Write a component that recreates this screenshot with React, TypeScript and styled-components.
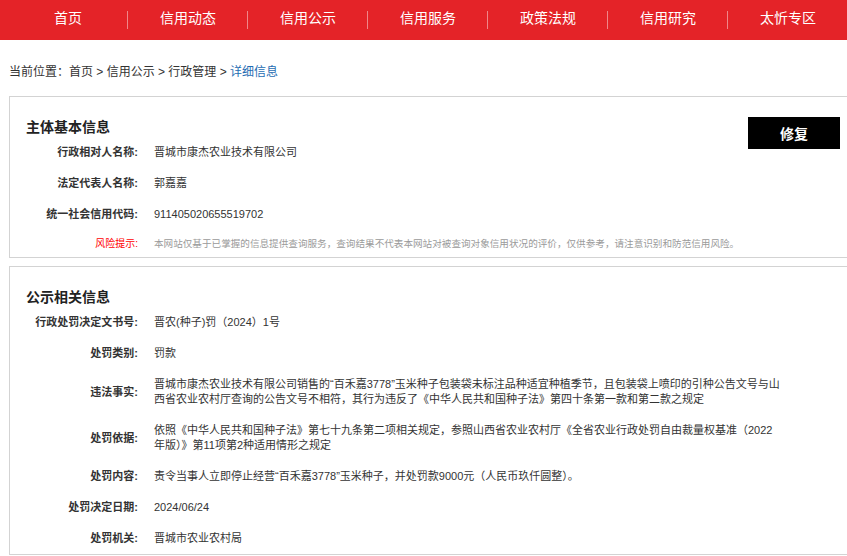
import React from "react";
import styled, { createGlobalStyle } from "styled-components";

const GlobalStyle = createGlobalStyle`
  html, body {
    margin: 0;
    padding: 0;
    background: #fff;
    overflow: hidden;
  }
  body {
    font-family: "Liberation Sans", "Noto Sans CJK SC", sans-serif;
    color: #333;
  }
`;

const Page = styled.div`
  width: 847px;
`;

const NavBar = styled.nav`
  height: 40px;
  background: #e42328;
  display: flex;
  padding-left: 8px;
`;

const NavItem = styled.a<{ $sep: boolean }>`
  position: relative;
  width: 120px;
  flex: none;
  text-align: center;
  line-height: 37px;
  font-size: 14px;
  color: #fff;
  text-decoration: none;
  &::after {
    content: "";
    display: ${(p) => (p.$sep ? "block" : "none")};
    position: absolute;
    right: 0;
    top: 11px;
    width: 1px;
    height: 18px;
    background: rgba(255, 255, 255, 0.45);
  }
`;

const Content = styled.div`
  padding-left: 9px;
  margin-right: -2px;
`;

const Crumbs = styled.div`
  font-size: 12px;
  line-height: 16px;
  padding: 24px 0 16px;
  color: #333;
`;

const CrumbCurrent = styled.span`
  color: #1f6db3;
`;

const Panel = styled.section<{ $gap?: number }>`
  border: 1px solid #d3d3d3;
  display: grid;
  grid-template-columns: minmax(0, 1fr) auto;
  align-items: start;
  margin-bottom: ${(p) => p.$gap ?? 0}px;
`;

const PanelBody = styled.div`
  min-width: 0;
  padding: 20px 0 0 0;
`;

const PanelTitle = styled.h2`
  margin: 0 0 0 16px;
  font-size: 14px;
  line-height: 20px;
  font-weight: bold;
  color: #222;
`;

const Rows = styled.div`
  display: grid;
  grid-template-columns: 128px 660px;
  column-gap: 16px;
`;

const Label = styled.div<{ $risk?: boolean }>`
  display: flex;
  align-items: center;
  justify-content: flex-end;
  padding: ${(p) => (p.$risk ? "6px 0" : "8px 0")};
  font-size: ${(p) => (p.$risk ? "10px" : "11px")};
  line-height: 15px;
  font-weight: ${(p) => (p.$risk ? "normal" : "bold")};
  color: ${(p) => (p.$risk ? "#f00" : "#333")};
  white-space: nowrap;
`;

const Value = styled.div<{ $risk?: boolean }>`
  display: flex;
  align-items: center;
  padding: ${(p) => (p.$risk ? "6px 0" : "8px 0")};
  font-size: ${(p) => (p.$risk ? "9.6px" : "11px")};
  line-height: 15px;
  color: ${(p) => (p.$risk ? "#9a9a9a" : "#333")};
  white-space: ${(p) => (p.$risk ? "nowrap" : "pre-line")};
`;

const RepairButton = styled.button`
  width: 92px;
  height: 32px;
  margin: 20px 8px 0 0;
  border: none;
  background: #000;
  color: #fff;
  font-family: "Liberation Sans", "Noto Sans CJK SC", sans-serif;
  font-size: 14px;
  font-weight: bold;
  cursor: pointer;
`;

const navItems = ["首页", "信用动态", "信用公示", "信用服务", "政策法规", "信用研究", "太忻专区"];

type Row = { label: string; value: string; risk?: boolean };

const basicRows: Row[] = [
  { label: "行政相对人名称:", value: "晋城市康杰农业技术有限公司" },
  { label: "法定代表人名称:", value: "郭嘉嘉" },
  { label: "统一社会信用代码:", value: "911405020655519702" },
  {
    label: "风险提示:",
    value:
      "本网站仅基于已掌握的信息提供查询服务，查询结果不代表本网站对被查询对象信用状况的评价，仅供参考，请注意识别和防范信用风险。",
    risk: true,
  },
];

const publicRows: Row[] = [
  { label: "行政处罚决定文书号:", value: "晋农(种子)罚（2024）1号" },
  { label: "处罚类别:", value: "罚款" },
  {
    label: "违法事实:",
    value:
      "晋城市康杰农业技术有限公司销售的“百禾嘉3778”玉米种子包装袋未标注品种适宜种植季节，且包装袋上喷印的引种公告文号与山\n西省农业农村厅查询的公告文号不相符，其行为违反了《中华人民共和国种子法》第四十条第一款和第二款之规定",
  },
  {
    label: "处罚依据:",
    value:
      "依照《中华人民共和国种子法》第七十九条第二项相关规定，参照山西省农业农村厅《全省农业行政处罚自由裁量权基准（2022\n年版）》第11项第2种适用情形之规定",
  },
  { label: "处罚内容:", value: "责令当事人立即停止经营“百禾嘉3778”玉米种子，并处罚款9000元（人民币玖仟圆整）。" },
  { label: "处罚决定日期:", value: "2024/06/24" },
  { label: "处罚机关:", value: "晋城市农业农村局" },
];

function InfoRows({ rows }: { rows: Row[] }) {
  return (
    <Rows>
      {rows.map((r) => (
        <React.Fragment key={r.label}>
          <Label $risk={r.risk}>{r.label}</Label>
          <Value $risk={r.risk}>{r.value}</Value>
        </React.Fragment>
      ))}
    </Rows>
  );
}

export default function App() {
  return (
    <Page>
      <GlobalStyle />
      <NavBar>
        {navItems.map((n, i) => (
          <NavItem key={n} href="#" $sep={i < navItems.length - 1}>
            {n}
          </NavItem>
        ))}
      </NavBar>
      <Content>
        <Crumbs>
          当前位置：首页 &gt; 信用公示 &gt; 行政管理 &gt; <CrumbCurrent>详细信息</CrumbCurrent>
        </Crumbs>
        <Panel $gap={8}>
          <PanelBody>
            <PanelTitle>主体基本信息</PanelTitle>
            <InfoRows rows={basicRows} />
          </PanelBody>
          <RepairButton>修复</RepairButton>
        </Panel>
        <Panel>
          <PanelBody>
            <PanelTitle>公示相关信息</PanelTitle>
            <InfoRows rows={publicRows} />
          </PanelBody>
        </Panel>
      </Content>
    </Page>
  );
}
